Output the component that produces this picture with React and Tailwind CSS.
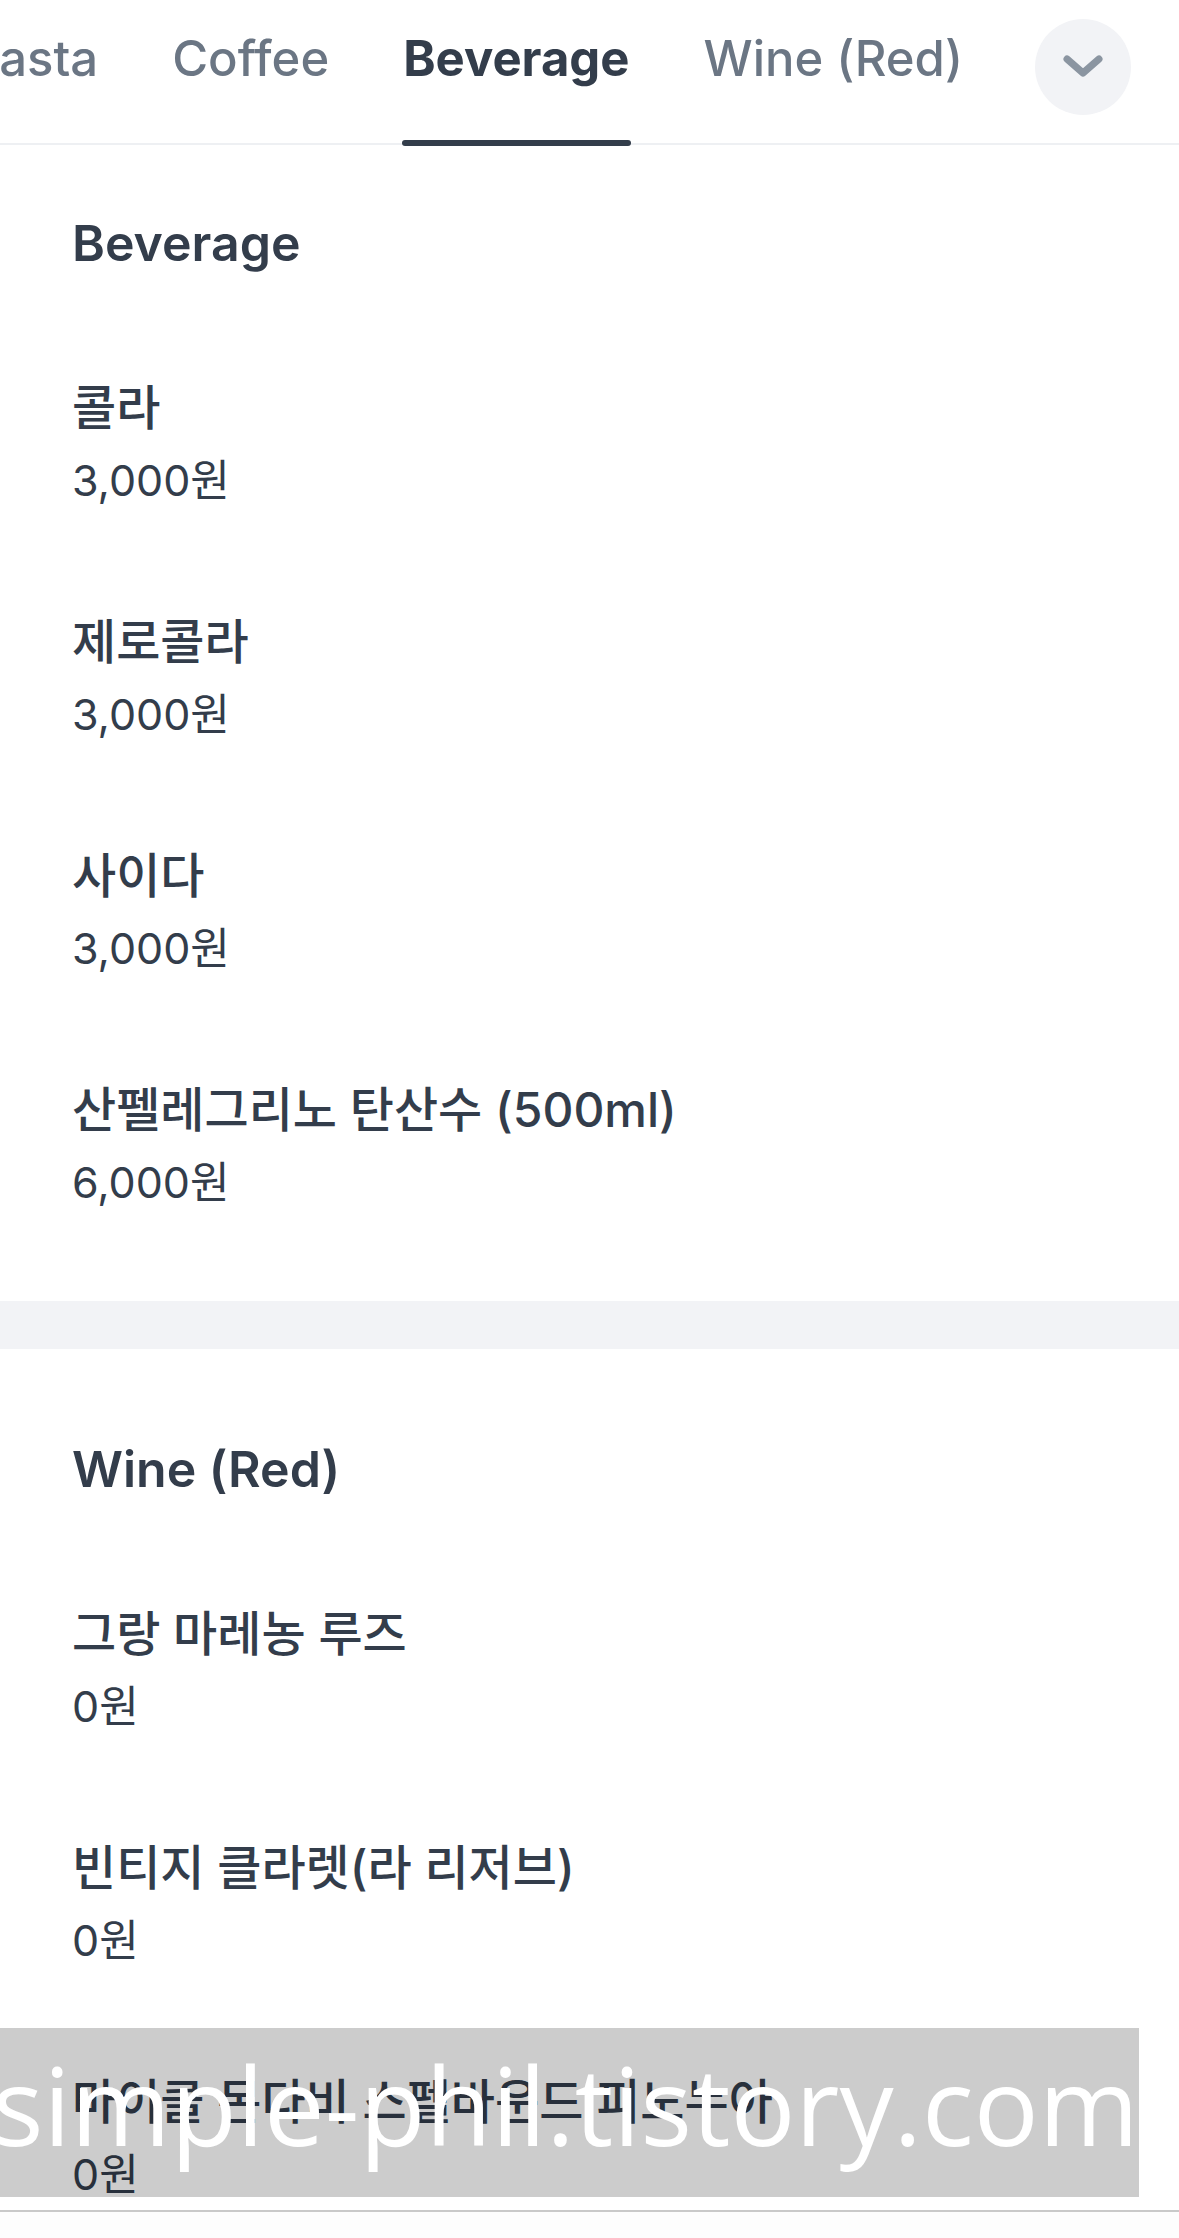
import React from "react";

const FONT = { fontFamily: "Inter, 'Noto Sans CJK KR', sans-serif" };

const tabs = [
  { label: "Pasta", active: false },
  { label: "Coffee", active: false },
  { label: "Beverage", active: true },
  { label: "Wine (Red)", active: false },
  { label: "Wine (White)", active: false },
];

const sections = [
  {
    title: "Beverage",
    items: [
      { name: "콜라", price: "3,000원" },
      { name: "제로콜라", price: "3,000원" },
      { name: "사이다", price: "3,000원" },
      { name: "산펠레그리노 탄산수 (500ml)", price: "6,000원" },
    ],
  },
  {
    title: "Wine (Red)",
    items: [
      { name: "그랑 마레농 루즈", price: "0원" },
      { name: "빈티지 클라렛(라 리저브)", price: "0원" },
      { name: "마이클 몬다비 스펠바운드 피노누아", price: "0원" },
    ],
  },
];

function Tabs() {
  return (
    <div className="flex h-[146px] bg-[linear-gradient(to_bottom,transparent_143px,#eef0f3_143px,#eef0f3_145px,transparent_145px)]">
      <div className="h-full w-[1010px] overflow-hidden">
        <div className="flex h-full gap-[46px] -ml-[46px]">
          {tabs.map((t) => (
            <div key={t.label} className="flex h-full shrink-0 flex-col px-[14px]">
              <div
                className={
                  "whitespace-nowrap pt-[29px] text-[49px] leading-[60px] " +
                  (t.active ? "font-bold text-[#333d4b]" : "font-medium text-[#6b7684]")
                }
              >
                {t.label}
              </div>
              <div
                className={
                  "-mx-[1px] mt-auto h-[6px] rounded-full " +
                  (t.active ? "bg-[#333d4b]" : "bg-transparent")
                }
              />
            </div>
          ))}
        </div>
      </div>
      <div className="ml-[25px] mt-[19px] flex h-[96px] w-[96px] items-center justify-center rounded-full bg-[#f2f3f6]">
        <svg width="48" height="30" viewBox="0 0 48 30" fill="none">
          <path
            d="M8 7 L24 21 L40 7"
            stroke="#8b95a1"
            strokeWidth="7"
            strokeLinecap="round"
            strokeLinejoin="round"
          />
        </svg>
      </div>
    </div>
  );
}

function Section({ title, items, last }) {
  return (
    <section className={"px-[72px] pt-[90px] " + (last ? "pb-[40px]" : "pb-[90px]")}>
      <h2 className="mb-[2px] text-[50px] font-semibold leading-[60px] text-[#333d4b]">{title}</h2>
      <ul>
        {items.map((it) => (
          <li key={it.name} className="flex flex-col pt-[104px]">
            <div className="whitespace-nowrap text-[48px] font-medium leading-[58px] text-[#333d4b]">
              {it.name}
            </div>
            <div className="mt-[14px] text-[43px] leading-[58px] text-[#333d4b]">{it.price}</div>
          </li>
        ))}
      </ul>
    </section>
  );
}

export default function App() {
  return (
    <div className="relative h-[2238px] w-[1179px] overflow-hidden bg-white" style={FONT}>
      <Tabs />
      <div className="-mt-[23px]">
        <Section {...sections[0]} />
      </div>
      <div className="h-[48px] bg-[#f2f3f6]" />
      <Section {...sections[1]} last />

      {/* watermark overlay */}
      <div className="absolute left-0 top-[2028px] h-[169px] w-[1139px] overflow-hidden bg-black/20">
        <div
          className="-ml-[8px] whitespace-nowrap pt-[23px] text-[108px] leading-[108px] text-white"
          style={{ fontFamily: "'Open Sans', sans-serif" }}
        >
          simple-phil.tistory.com
        </div>
      </div>

      {/* bottom bar */}
      <div className="absolute bottom-0 left-0 h-[28px] w-full border-t-2 border-[#c9c9c9] bg-[#fdfdfd]" />
    </div>
  );
}
